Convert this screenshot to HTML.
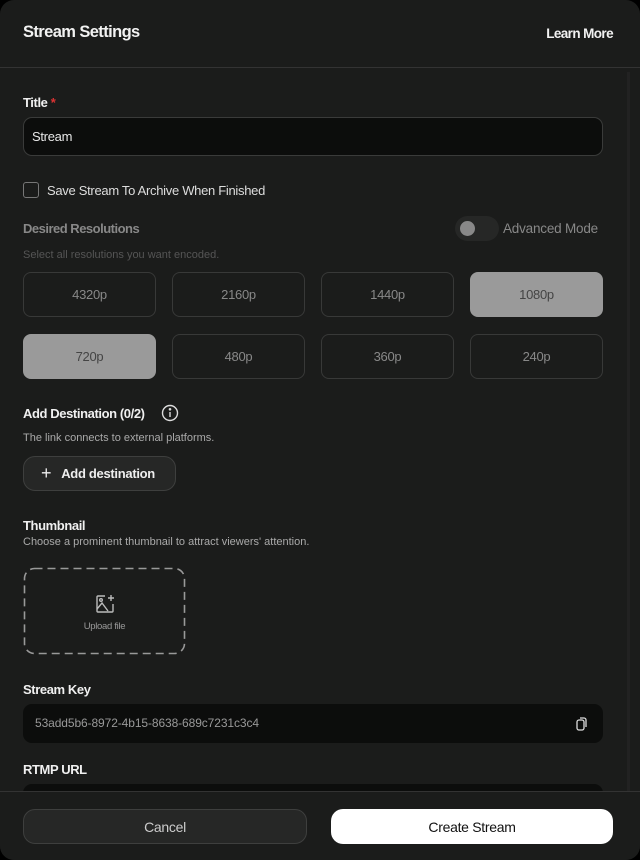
<!DOCTYPE html>
<html><head><style>
*{box-sizing:border-box;margin:0;padding:0}
body{width:640px;height:860px;background:#000;font-family:"Liberation Sans",sans-serif;overflow:hidden;position:relative;letter-spacing:-0.3px}
.m{position:absolute;left:0;top:0;width:640px;height:860px;background:#1b1c1b;border-radius:14px;overflow:hidden}
.a{position:absolute}
.h1{left:23px;top:23px;font-size:16.5px;color:#f2f2f2;font-weight:bold;letter-spacing:-0.6px}
.lm{right:27px;top:26px;font-size:13.5px;color:#f2f2f2;font-weight:bold;letter-spacing:-0.6px}
.hl{left:0;top:67px;width:640px;height:1px;background:#333}
.lbl{font-size:13px;color:#f0f0f0;font-weight:bold;left:23px;letter-spacing:-0.4px}
.sub{font-size:11px;color:#aaa;left:23px;letter-spacing:0}
.inp{left:23px;width:580px;background:#0c0d0c;border-radius:9px}
.rb{position:absolute;width:133px;height:45px;border:1px solid #383938;border-radius:8px;color:#888;font-size:13px;display:flex;align-items:center;justify-content:center}
.rb.s{background:#9a9a9a;color:#444;border-color:#9a9a9a}
.btn{position:absolute;top:809px;height:35px;border-radius:12px;display:flex;align-items:center;justify-content:center;font-size:14px}
</style></head><body><div class="m">
<div class="a h1">Stream Settings</div>
<div class="a lm">Learn More</div>
<div class="a hl"></div>
<div class="a" style="left:627px;top:72px;width:3px;height:720px;background:#222"></div>
<div class="a lbl" style="top:95px">Title <span style="color:#d33">*</span></div>
<div class="a inp" style="top:117px;height:39px;border:1px solid #3a3b3a;color:#e8e8e8;font-size:13px;padding:11px 8px">Stream</div>
<div class="a" style="left:23px;top:182px;width:16px;height:16px;border:1.5px solid #777;border-radius:3px"></div>
<div class="a" style="left:47px;top:183px;font-size:13px;color:#ddd">Save Stream To Archive When Finished</div>
<div class="a" style="left:23px;top:221px;font-size:13px;color:#888;font-weight:bold;letter-spacing:-0.5px">Desired Resolutions</div>
<div class="a" style="left:455px;top:216px;width:44px;height:25px;border-radius:13px;background:#262726"></div>
<div class="a" style="left:460px;top:221px;width:15px;height:15px;border-radius:50%;background:#888"></div>
<div class="a" style="left:503px;top:221px;font-size:13.5px;color:#888;letter-spacing:-0.2px">Advanced Mode</div>
<div class="a sub" style="top:249px;color:#555">Select all resolutions you want encoded.</div>
<div class="rb" style="left:23px;top:272px">4320p</div>
<div class="rb" style="left:172px;top:272px">2160p</div>
<div class="rb" style="left:321px;top:272px">1440p</div>
<div class="rb s" style="left:470px;top:272px">1080p</div>
<div class="rb s" style="left:23px;top:334px">720p</div>
<div class="rb" style="left:172px;top:334px">480p</div>
<div class="rb" style="left:321px;top:334px">360p</div>
<div class="rb" style="left:470px;top:334px">240p</div>
<div class="a lbl" style="top:406px">Add Destination (0/2)</div>
<svg class="a" style="left:161px;top:404px" width="18" height="18" viewBox="0 0 18 18" fill="none" stroke="#ddd" stroke-width="1.4"><circle cx="9" cy="9" r="7.5"/><line x1="9" y1="8" x2="9" y2="13"/><circle cx="9" cy="5.3" r=".6" fill="#ddd"/></svg>
<div class="a sub" style="top:432px">The link connects to external platforms.</div>
<div class="a" style="left:23px;top:456px;width:153px;height:35px;border:1px solid #3e3f3e;background:#262726;border-radius:12px;color:#eee;font-size:13px;font-weight:bold;display:flex;align-items:center;padding-left:17px"><span style="font-size:18px;font-weight:normal;margin-right:10px">+</span>Add destination</div>
<div class="a lbl" style="top:518px">Thumbnail</div>
<div class="a sub" style="top:536px">Choose a prominent thumbnail to attract viewers' attention.</div>
<svg class="a" style="left:23px;top:567px" width="164" height="89" viewBox="0 0 164 89" fill="none"><rect x="1.5" y="1.5" width="160" height="85" rx="10" stroke="#999" stroke-width="1.6" stroke-dasharray="8 5"/></svg>
<svg class="a" style="left:94px;top:593px" width="22" height="22" viewBox="0 0 22 22" fill="none" stroke="#bbb" stroke-width="1.4"><path d="M11 3H4a1 1 0 0 0-1 1v14a1 1 0 0 0 1 1h14a1 1 0 0 0 1-1v-7"/><path d="M3 16l5-6 6 8"/><circle cx="7" cy="7" r="1.3"/><path d="M17 2v6M14 5h6"/></svg>
<div class="a" style="left:24px;top:621px;width:161px;text-align:center;font-size:9.5px;color:#999">Upload file</div>
<div class="a lbl" style="top:682px">Stream Key</div>
<div class="a inp" style="top:704px;height:39px;color:#999;font-size:12px;padding:12px 12px;letter-spacing:-0.1px">53add5b6-8972-4b15-8638-689c7231c3c4</div>
<svg class="a" style="left:575px;top:716px" width="14" height="16" viewBox="0 0 14 16" fill="none" stroke="#ddd" stroke-width="1.3"><rect x="2" y="4" width="7" height="10" rx="2"/><path d="M5 2h4a2 2 0 0 1 2 2v7"/></svg>
<div class="a lbl" style="top:762px">RTMP URL</div>
<div class="a inp" style="top:784px;height:30px"></div>
<div class="a" style="left:0;top:791px;width:640px;height:69px;background:#1b1c1b;border-top:1px solid #333"></div>
<div class="btn" style="left:23px;width:284px;background:#262726;border:1px solid #3e3f3e;color:#ccc">Cancel</div>
<div class="btn" style="left:331px;width:282px;background:#fff;color:#111">Create Stream</div>
</div></body></html>
